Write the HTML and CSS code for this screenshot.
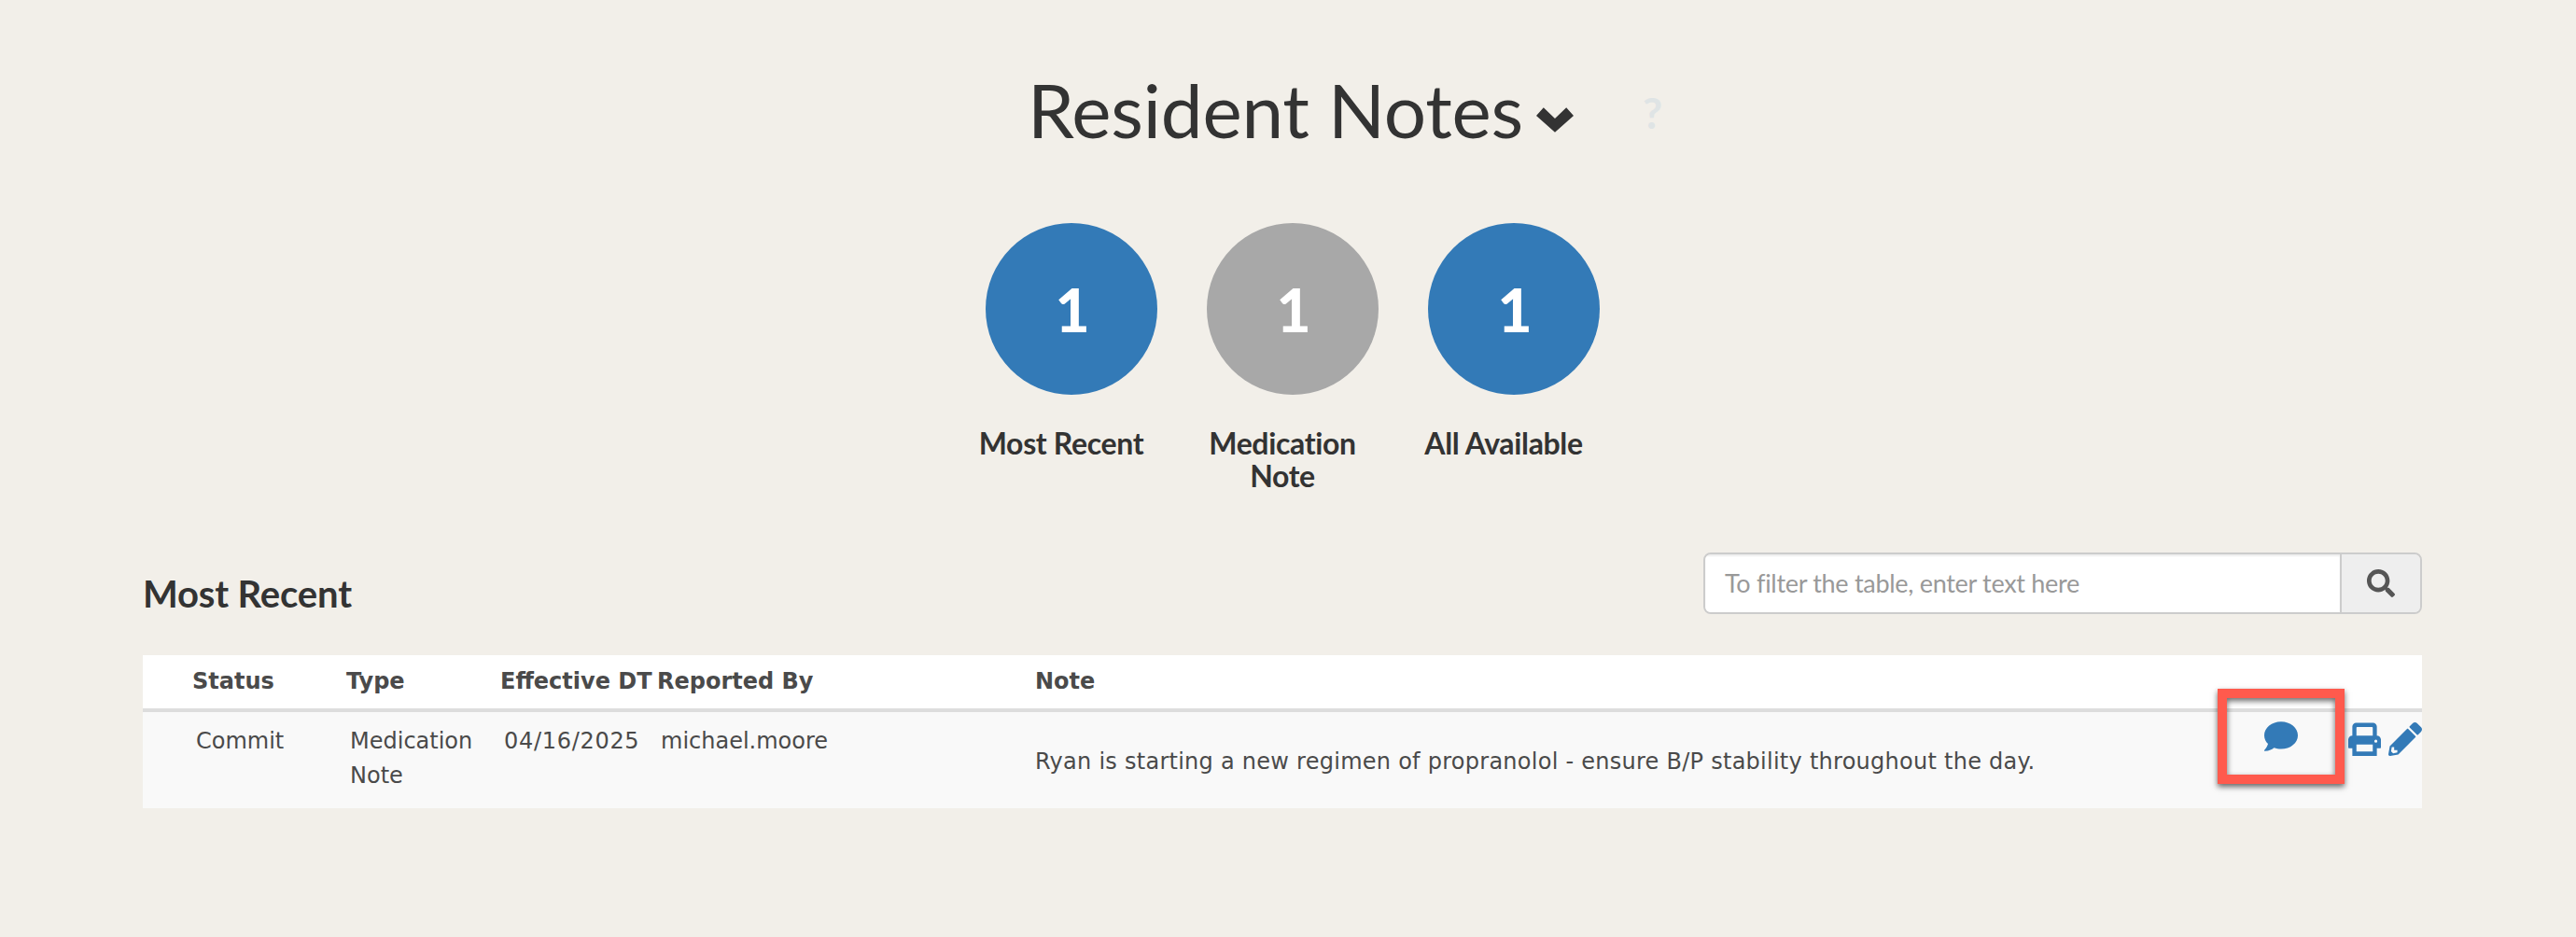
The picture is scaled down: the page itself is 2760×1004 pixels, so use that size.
FILE: index.html
```html
<!DOCTYPE html>
<html lang="en">
<head>
<meta charset="utf-8">
<title>Resident Notes</title>
<link rel="stylesheet" href="styles.css">
</head>
<body>
<main class="page">
  <header class="title-row">
    <h1 class="title">Resident Notes</h1>
    <svg class="chevron" viewBox="0 0 41 27"><path d="M0 9 8 0 20.500 12 33 0 41 9 20.500 27z"/></svg>
    <span class="help">?</span>
  </header>
  <section class="stats">
    <div class="stat">
      <div class="circle blue">1</div>
      <div class="stat-label">Most Recent</div>
    </div>
    <div class="stat">
      <div class="circle grey">1</div>
      <div class="stat-label">Medication Note</div>
    </div>
    <div class="stat">
      <div class="circle blue">1</div>
      <div class="stat-label">All Available</div>
    </div>
  </section>
  <section class="list-head">
    <h2 class="list-title">Most Recent</h2>
    <div class="search">
      <div class="search-input">To filter the table, enter text here</div>
      <div class="search-btn">
        <svg class="search-icon" viewBox="0 0 512 512"><path d="M505 442.700 405.300 343c-4.500-4.500-10.600-7-17-7H372c27.600-35.300 44-79.700 44-128C416 93.100 322.900 0 208 0S0 93.100 0 208s93.100 208 208 208c48.300 0 92.700-16.400 128-44v16.300c0 6.400 2.500 12.500 7 17l99.700 99.700c9.400 9.400 24.600 9.400 33.900 0l28.300-28.300c9.400-9.400 9.400-24.600.1-34zM208 336c-70.700 0-128-57.200-128-128 0-70.700 57.200-128 128-128 70.700 0 128 57.200 128 128 0 70.700-57.200 128-128 128z"/></svg>
      </div>
    </div>
  </section>
  <table class="notes">
    <thead>
      <tr>
        <th class="c-status">Status</th>
        <th class="c-type">Type</th>
        <th class="c-date">Effective DT</th>
        <th class="c-by">Reported By</th>
        <th class="c-note">Note</th>
        <th class="c-actions"></th>
      </tr>
    </thead>
    <tbody>
      <tr>
        <td class="c-status">Commit</td>
        <td class="c-type">Medication Note</td>
        <td class="c-date date-value">04/16/2025</td>
        <td class="c-by">michael.moore</td>
        <td class="c-note"><span class="note-text">Ryan is starting a new regimen of propranolol - ensure B/P stability throughout the day.</span></td>
        <td class="c-actions">
          <div class="actions">
            <div class="callout">
              <svg class="ic-chat" viewBox="0 0 512 512"><path d="M256 32C114.600 32 0 125.100 0 240c0 49.600 21.400 95 57 130.700C44.500 421.100 2.700 466 2.200 466.500c-2.200 2.300-2.800 5.700-1.500 8.700S4.800 480 8 480c66.300 0 116-31.800 140.600-51.400 32.700 12.300 69 19.400 107.400 19.400 141.400 0 256-93.100 256-208S397.400 32 256 32z"/></svg>
            </div>
            <svg class="ic-print" viewBox="0 0 512 512"><path fill-rule="evenodd" d="M64 200V60C64 27 91 0 124 0h264c33 0 60 27 60 60v140c36 0 64 28 64 64v120c0 9-7 16-16 16h-48v112c0 18-14 32-32 32H96c-18 0-32-14-32-32V400H16c-9 0-16-7-16-16V264c0-36 28-64 64-64zm64 0h256V76c0-7-5-12-12-12H140c-7 0-12 5-12 12zm0 140v108h256V340zm304-76a24 24 0 1 0 0 48 24 24 0 0 0 0-48z"/></svg>
            <svg class="ic-pencil" viewBox="0 0 512 512"><path d="M497.900 142.100l-46.100 46.100c-4.700 4.700-12.300 4.700-17 0l-111-111c-4.700-4.700-4.700-12.300 0-17l46.100-46.100c18.700-18.700 49.100-18.700 67.900 0l60.100 60.100c18.800 18.700 18.800 49.100 0 67.900zM284.200 99.800L21.600 362.400.4 483.900c-2.900 16.400 11.400 30.600 27.800 27.800l121.500-21.300 262.600-262.600c4.700-4.700 4.700-12.300 0-17l-111-111c-4.800-4.700-12.400-4.700-17.100 0zM88 424h48v36.300l-64.500 11.300-31.100-31.100L51.700 376H88v48z"/></svg>
          </div>
        </td>
      </tr>
    </tbody>
  </table>
</main>
</body>
</html>
```
FILE: styles.css
```css
* { box-sizing: border-box; }
html, body { margin: 0; height: 100%; }
body { background: #f2efe9; color: #333; font-family: Lato, "Liberation Sans", sans-serif; }
.page { padding: 0 165px 0 153px; height: 1004px; overflow: hidden; }

.title-row { display: flex; align-items: flex-start; height: 239px; padding: 66px 0 0 948px; }
.title { margin: 0; font-size: 80px; font-weight: 400; line-height: 102px; letter-spacing: -0.2px; color: #333; white-space: nowrap; }
.chevron { width: 40px; height: 27px; fill: #333; margin: 49px 0 0 14px; flex: none; }
.help { margin: 24px 0 0 74px; font-size: 46px; line-height: 62px; font-weight: 700; color: #dfe4e5; }

.stats { display: flex; padding-left: 892px; height: 353px; }
.stat { width: 237px; display: flex; flex-direction: column; }
.circle { width: 184px; height: 184px; margin-left: 11px; border-radius: 50%; display: flex; align-items: center; justify-content: center; color: #fff; font-size: 64px; font-weight: 900; padding-left: 2px; }
.blue { background: #337ab7; }
.grey { background: #a8a8a8; }
.stat-label { width: 184px; margin: 34px 0 0 0; font-size: 32px; line-height: 35px; font-weight: 700; letter-spacing: -0.35px; text-align: center; color: #333; }

.list-head { display: flex; justify-content: space-between; align-items: flex-start; height: 110px; }
.list-title { margin: 20px 0 0 0; font-size: 40px; line-height: 48px; font-weight: 700; letter-spacing: -0.15px; color: #333; }
.search { display: flex; width: 770px; height: 66px; border: 2px solid #ccc; border-radius: 8px; overflow: hidden; }
.search-input { flex: 1; background: #fff; padding-left: 21px; font-size: 27px; line-height: 62px; letter-spacing: -0.3px; color: #999; box-shadow: inset 0 2px 2px rgba(0,0,0,.07); }
.search-btn { width: 86px; background: #eee; border-left: 2px solid #ccc; display: flex; align-items: center; justify-content: center; }
.search-icon { width: 30px; height: 30px; fill: #555; }

.notes { width: 100%; border-collapse: separate; border-spacing: 0; table-layout: fixed; font-family: "DejaVu Sans", Verdana, sans-serif; font-size: 24px; color: #4a4a4a; }
.notes th { background: #fff; height: 61px; padding: 0 0 2px; text-align: left; font-weight: 700; border-bottom: 4px solid #ddd; white-space: nowrap; vertical-align: middle; }
.notes td { background: #f9f9f9; height: 103px; padding: 13px 4px 0; vertical-align: top; line-height: 37px; }
.c-status { width: 218px; }
.c-type { width: 165px; }
.c-date { width: 168px; }
.c-by { width: 405px; }
.c-note { width: 1180px; }
.notes th.c-status { padding-left: 53px; }
.notes td.c-status { padding-left: 57px; }
.date-value { letter-spacing: 0.7px; }
.notes th.c-note { padding-left: 0; }
.notes td.c-note { padding: 35px 0 0; white-space: nowrap; letter-spacing: 0.26px; }
.notes td.c-actions { padding: 0; overflow: visible; }
.actions { position: relative; display: flex; justify-content: flex-end; align-items: center; gap: 8px; height: 36px; margin-top: 11px; }
.callout { position: absolute; right: 83px; top: -36px; width: 136px; height: 102px; border: 10px solid #ff5a4d; box-shadow: 0 3px 6px rgba(0,0,0,.6), inset 0 3px 6px rgba(0,0,0,.6); display: flex; align-items: center; justify-content: center; }
.ic-chat { width: 36px; height: 36px; fill: #337ab7; }
.ic-print { width: 35px; height: 36px; fill: #337ab7; flex: none; }
.ic-pencil { width: 36px; height: 36px; fill: #337ab7; flex: none; }
```
